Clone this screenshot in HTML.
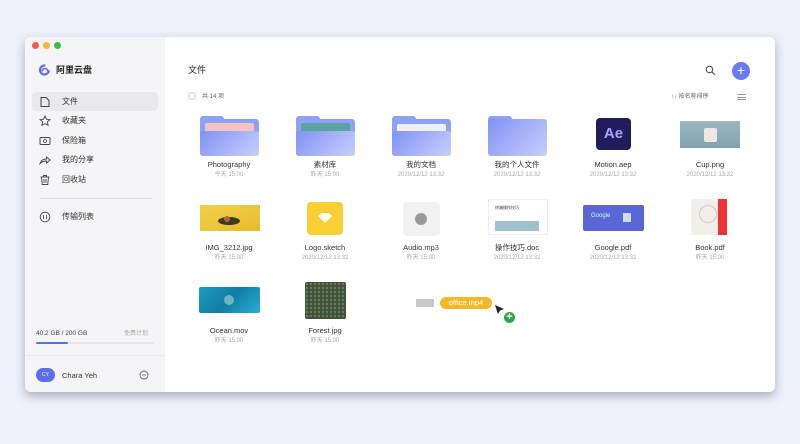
<!DOCTYPE html>
<html><head><meta charset="utf-8"><style>
*{margin:0;padding:0;box-sizing:border-box}
body{width:800px;height:444px;overflow:hidden;background:#eef1fa;font-family:"Liberation Sans","Noto Sans CJK SC",sans-serif;position:relative}
.win{position:absolute;left:25px;top:37px;width:750px;height:355px;background:#fff;border-radius:6px;box-shadow:0 4px 10px rgba(40,50,80,.35);overflow:hidden}
.side{position:absolute;left:0;top:0;width:140px;height:355px;background:#f5f5f7}
.dot{position:absolute;top:5px;width:7px;height:7px;border-radius:50%}
.a{position:absolute}
.nav{position:absolute;left:7px;width:126px;height:19px;border-radius:4px;font-size:8px;color:#333;line-height:10px}
.nav span{position:absolute;left:30px;top:5px}
.nav svg{position:absolute;left:7px;top:4px}
.nm{position:absolute;width:100px;text-align:center;font-size:7.5px;color:#333;line-height:10px}
.dt{position:absolute;width:100px;text-align:center;font-size:6px;color:#aaa;line-height:8px}
</style></head><body>
<div class="win">
<div class="side">
<div class="dot" style="left:7px;background:#f25a55"></div>
<div class="dot" style="left:18px;background:#f5b92c"></div>
<div class="dot" style="left:29px;background:#30c449"></div>
<svg class="a" style="left:13px;top:27px" width="13" height="12" viewBox="0 0 13 12"><path d="M6.5 1.5a4.5 4.5 0 1 0 4.3 5.8" fill="none" stroke="#5b6ef2" stroke-width="2.2" stroke-linecap="round"/><path d="M4 7.5a3 3 0 0 1 6 0" fill="none" stroke="#5b6ef2" stroke-width="1.6"/></svg>
<div class="a" style="left:31px;top:28px;font-size:9px;font-weight:bold;color:#222;line-height:11px">阿里云盘</div>
<div class="nav" style="top:55px;background:#e9e9ec"><svg width="12" height="12" viewBox="0 0 12 12"><path d="M2 1.5h5l3 3v6H2z" fill="none" stroke="#444" stroke-width="1"/></svg><span>文件</span></div>
<div class="nav" style="top:74px"><svg width="12" height="12" viewBox="0 0 12 12"><path d="M6 1l1.5 3.2 3.4.4-2.5 2.3.7 3.4L6 8.6 2.9 10.3l.7-3.4L1.1 4.6l3.4-.4z" fill="none" stroke="#444" stroke-width=".9"/></svg><span>收藏夹</span></div>
<div class="nav" style="top:94px"><svg width="12" height="12" viewBox="0 0 12 12"><rect x="1" y="2.5" width="10" height="7" rx="1" fill="none" stroke="#444"/><circle cx="6" cy="6" r="1.5" fill="none" stroke="#444" stroke-width=".8"/></svg><span>保险箱</span></div>
<div class="nav" style="top:113px"><svg width="12" height="12" viewBox="0 0 12 12"><path d="M1 9.5C2 6 4.5 5 7.5 5V3l3.5 3-3.5 3V7C5 7 3 7.5 1 9.5z" fill="none" stroke="#444" stroke-width=".9"/></svg><span>我的分享</span></div>
<div class="nav" style="top:133px"><svg width="12" height="12" viewBox="0 0 12 12"><path d="M1.5 3h9M4.5 3V1.5h3V3M2.5 3l.7 7.5h5.6L9.5 3M5 5v4M7 5v4" fill="none" stroke="#444" stroke-width=".9"/></svg><span>回收站</span></div>
<div class="a" style="left:14px;top:161px;width:114px;height:1px;background:#e3e3e6"></div>
<div class="nav" style="top:170px"><svg width="12" height="12" viewBox="0 0 12 12"><circle cx="6" cy="6" r="4.8" fill="none" stroke="#444" stroke-width=".9"/><path d="M4.5 4v4M7.5 4v4" stroke="#444" stroke-width=".8"/></svg><span>传输列表</span></div>
<div class="a" style="left:11px;top:293px;font-size:6.5px;color:#444">40.2 GB / 200 GB</div>
<div class="a" style="left:99px;top:293px;font-size:6px;color:#aaa;line-height:8px">免费计划</div>
<div class="a" style="left:11px;top:305px;width:118px;height:2px;background:#e6e6ea;border-radius:1px"></div>
<div class="a" style="left:11px;top:305px;width:32px;height:2px;background:#5b6ef2;border-radius:1px"></div>
<div class="a" style="left:0;top:318px;width:140px;height:1px;background:#ebebee"></div>
<div class="a" style="left:11px;top:331px;width:19px;height:14px;border-radius:7px;background:#5b6ef2;color:#fff;font-size:5px;text-align:center;line-height:14px">CY</div>
<div class="a" style="left:37px;top:334px;font-size:7.5px;color:#333">Chara Yeh</div>
<svg class="a" style="left:114px;top:333px" width="10" height="10" viewBox="0 0 10 10"><circle cx="5" cy="5" r="4" fill="none" stroke="#666" stroke-width=".9"/><path d="M3 5h4" stroke="#666" stroke-width=".8"/></svg>
</div>
<div class="a" style="left:163px;top:28px;font-size:9px;color:#222;line-height:11px">文件</div>
<svg class="a" style="left:680px;top:28px" width="11" height="11" viewBox="0 0 11 11"><circle cx="4.5" cy="4.5" r="3.3" fill="none" stroke="#444" stroke-width="1"/><path d="M7 7l3 3" stroke="#444" stroke-width="1"/></svg>
<div class="a" style="left:707px;top:25px;width:18px;height:18px;border-radius:50%;background:#6a7cf5;color:#fff;font-size:14px;line-height:17px;text-align:center">+</div>
<div class="a" style="left:163px;top:55px;width:8px;height:8px;border-radius:50%;border:1px solid #ccc"></div>
<div class="a" style="left:177px;top:56px;font-size:6px;color:#666;line-height:8px">共 14 项</div>
<div class="a" style="left:646px;top:56px;font-size:6px;color:#666;line-height:8px">↑↓ 按名称排序</div>
<div class="a" style="left:712px;top:57px;width:9px;height:6px;border-top:1px solid #999;border-bottom:1px solid #999"></div>
<div class="a" style="left:712px;top:59.5px;width:9px;height:1px;background:#999"></div>
</div>
<div class="a" style="left:200px;top:116px;width:59px;height:40px">
<div class="a" style="left:0;top:0;width:24px;height:8px;background:#8fa1f7;border-radius:3px 3px 0 0"></div>
<div class="a" style="left:0;top:3px;width:59px;height:37px;background:#8fa1f7;border-radius:3px"></div>
<div class="a" style="left:5px;top:7px;width:49px;height:14px;background:#f6c3c3;border-radius:2px"></div>
<div class="a" style="left:0;top:15px;width:59px;height:25px;background:linear-gradient(135deg,#8092f5,#c8cffb);border-radius:3px"></div></div>
<div class="a" style="left:296px;top:116px;width:59px;height:40px">
<div class="a" style="left:0;top:0;width:24px;height:8px;background:#8fa1f7;border-radius:3px 3px 0 0"></div>
<div class="a" style="left:0;top:3px;width:59px;height:37px;background:#8fa1f7;border-radius:3px"></div>
<div class="a" style="left:5px;top:7px;width:49px;height:14px;background:#5aa3a0;border-radius:2px"></div>
<div class="a" style="left:0;top:15px;width:59px;height:25px;background:linear-gradient(135deg,#8092f5,#c8cffb);border-radius:3px"></div></div>
<div class="a" style="left:392px;top:116px;width:59px;height:40px">
<div class="a" style="left:0;top:0;width:24px;height:8px;background:#8fa1f7;border-radius:3px 3px 0 0"></div>
<div class="a" style="left:0;top:3px;width:59px;height:37px;background:#8fa1f7;border-radius:3px"></div>
<div class="a" style="left:5px;top:8px;width:49px;height:8px;background:#eef0ff;border-radius:2px"></div>
<div class="a" style="left:0;top:15px;width:59px;height:25px;background:linear-gradient(135deg,#8092f5,#c8cffb);border-radius:3px"></div></div>
<div class="a" style="left:488px;top:116px;width:59px;height:40px">
<div class="a" style="left:0;top:0;width:24px;height:8px;background:#8fa1f7;border-radius:3px 3px 0 0"></div>
<div class="a" style="left:0;top:3px;width:59px;height:37px;background:linear-gradient(135deg,#8092f5,#c8cffb);border-radius:3px"></div></div>
<div class="a" style="left:596px;top:118px;width:35px;height:32px;background:#1f1d5c;border-radius:4px;color:#a4a6ff;font-size:15px;font-weight:bold;text-align:center;line-height:32px">Ae</div>
<div class="a" style="left:680px;top:121px;width:60px;height:27px;background:linear-gradient(#9db7c2,#7fa2b0)"><div class="a" style="left:24px;top:7px;width:13px;height:14px;background:#f0e6e3;border-radius:2px"></div></div>
<div class="a" style="left:200px;top:205px;width:60px;height:26px;background:linear-gradient(160deg,#f3d14a,#e7bb2c)"><div class="a" style="left:18px;top:12px;width:22px;height:8px;border-radius:50%;background:#3e3a22"></div><div class="a" style="left:24px;top:11px;width:6px;height:6px;border-radius:50%;background:#b06a35"></div></div>
<div class="a" style="left:307px;top:202px;width:36px;height:33px;background:#f9cf35;border-radius:4px"><div class="a" style="left:11px;top:11px;width:14px;height:10px;background:#fff;clip-path:polygon(0 30%,25% 0,75% 0,100% 30%,50% 100%)"></div></div>
<div class="a" style="left:403px;top:202px;width:37px;height:34px;background:#f1f1f1;border-radius:4px"><div class="a" style="left:12px;top:11px;width:12px;height:12px;border-radius:50%;background:#999"></div></div>
<div class="a" style="left:488px;top:199px;width:60px;height:36px;background:#fff;border:1px solid #eee"><div class="a" style="left:6px;top:5px;font-size:4px;color:#333;line-height:5px">终端操作技巧</div><div class="a" style="left:6px;top:21px;width:44px;height:10px;background:#9fc0c8"></div></div>
<div class="a" style="left:583px;top:205px;width:61px;height:26px;background:#5966d5;border-radius:2px"><div class="a" style="left:8px;top:8px;font-size:6px;color:#cfe">Google</div><div class="a" style="left:40px;top:8px;width:8px;height:9px;background:#cde"></div></div>
<div class="a" style="left:691px;top:199px;width:36px;height:36px;background:#f2efe9"><div class="a" style="left:27px;top:0;width:9px;height:36px;background:#e33"></div><div class="a" style="left:8px;top:6px;width:18px;height:18px;border-radius:50%;border:1px solid #ccc"></div></div>
<div class="a" style="left:199px;top:287px;width:61px;height:26px;background:linear-gradient(135deg,#1b9cc4,#127da3,#29b0d4);border-radius:2px"><div class="a" style="left:25px;top:8px;width:10px;height:10px;border-radius:50%;background:rgba(255,255,255,.4)"></div></div>
<div class="a" style="left:305px;top:282px;width:41px;height:37px;background:#3e4f3a;border-radius:2px;background-image:radial-gradient(#6b7f57 1px,transparent 1.5px);background-size:4px 4px"></div>
<div class="a" style="left:416px;top:299px;width:18px;height:8px;background:#c8c8c8"></div>
<div class="a" style="left:440px;top:297px;width:52px;height:12px;border-radius:6px;background:#f3b72a;color:#fff;font-size:7.5px;text-align:center;line-height:12px">office.mp4</div>
<svg class="a" style="left:494px;top:304px" width="12" height="12" viewBox="0 0 12 12"><path d="M1 1l9 4-4 1.5L4 10z" fill="#222"/></svg>
<div class="a" style="left:503px;top:311px;width:13px;height:13px;border-radius:50%;background:#29a745;border:1px solid #fff;color:#fff;font-size:11px;line-height:11px;text-align:center;font-weight:bold">+</div>
<div class="nm" style="left:179px;top:160px">Photography</div><div class="dt" style="left:179px;top:171px">今天 15:00</div>
<div class="nm" style="left:275px;top:160px">素材库</div><div class="dt" style="left:275px;top:171px">昨天 15:00</div>
<div class="nm" style="left:371px;top:160px">我的文档</div><div class="dt" style="left:371px;top:171px">2020/12/12 13:32</div>
<div class="nm" style="left:467px;top:160px">我的个人文件</div><div class="dt" style="left:467px;top:171px">2020/12/12 13:32</div>
<div class="nm" style="left:563px;top:160px">Motion.aep</div><div class="dt" style="left:563px;top:171px">2020/12/12 13:32</div>
<div class="nm" style="left:660px;top:160px">Cup.png</div><div class="dt" style="left:660px;top:171px">2020/12/12 13:32</div>
<div class="nm" style="left:179px;top:243px">IMG_3212.jpg</div><div class="dt" style="left:179px;top:254px">昨天 15:00</div>
<div class="nm" style="left:275px;top:243px">Logo.sketch</div><div class="dt" style="left:275px;top:254px">2020/12/12 13:32</div>
<div class="nm" style="left:371px;top:243px">Audio.mp3</div><div class="dt" style="left:371px;top:254px">昨天 15:00</div>
<div class="nm" style="left:467px;top:243px">操作技巧.doc</div><div class="dt" style="left:467px;top:254px">2020/12/12 13:32</div>
<div class="nm" style="left:563px;top:243px">Google.pdf</div><div class="dt" style="left:563px;top:254px">2020/12/12 13:32</div>
<div class="nm" style="left:660px;top:243px">Book.pdf</div><div class="dt" style="left:660px;top:254px">昨天 15:00</div>
<div class="nm" style="left:179px;top:326px">Ocean.mov</div><div class="dt" style="left:179px;top:337px">昨天 15:00</div>
<div class="nm" style="left:275px;top:326px">Forest.jpg</div><div class="dt" style="left:275px;top:337px">昨天 15:00</div>
</body></html>
